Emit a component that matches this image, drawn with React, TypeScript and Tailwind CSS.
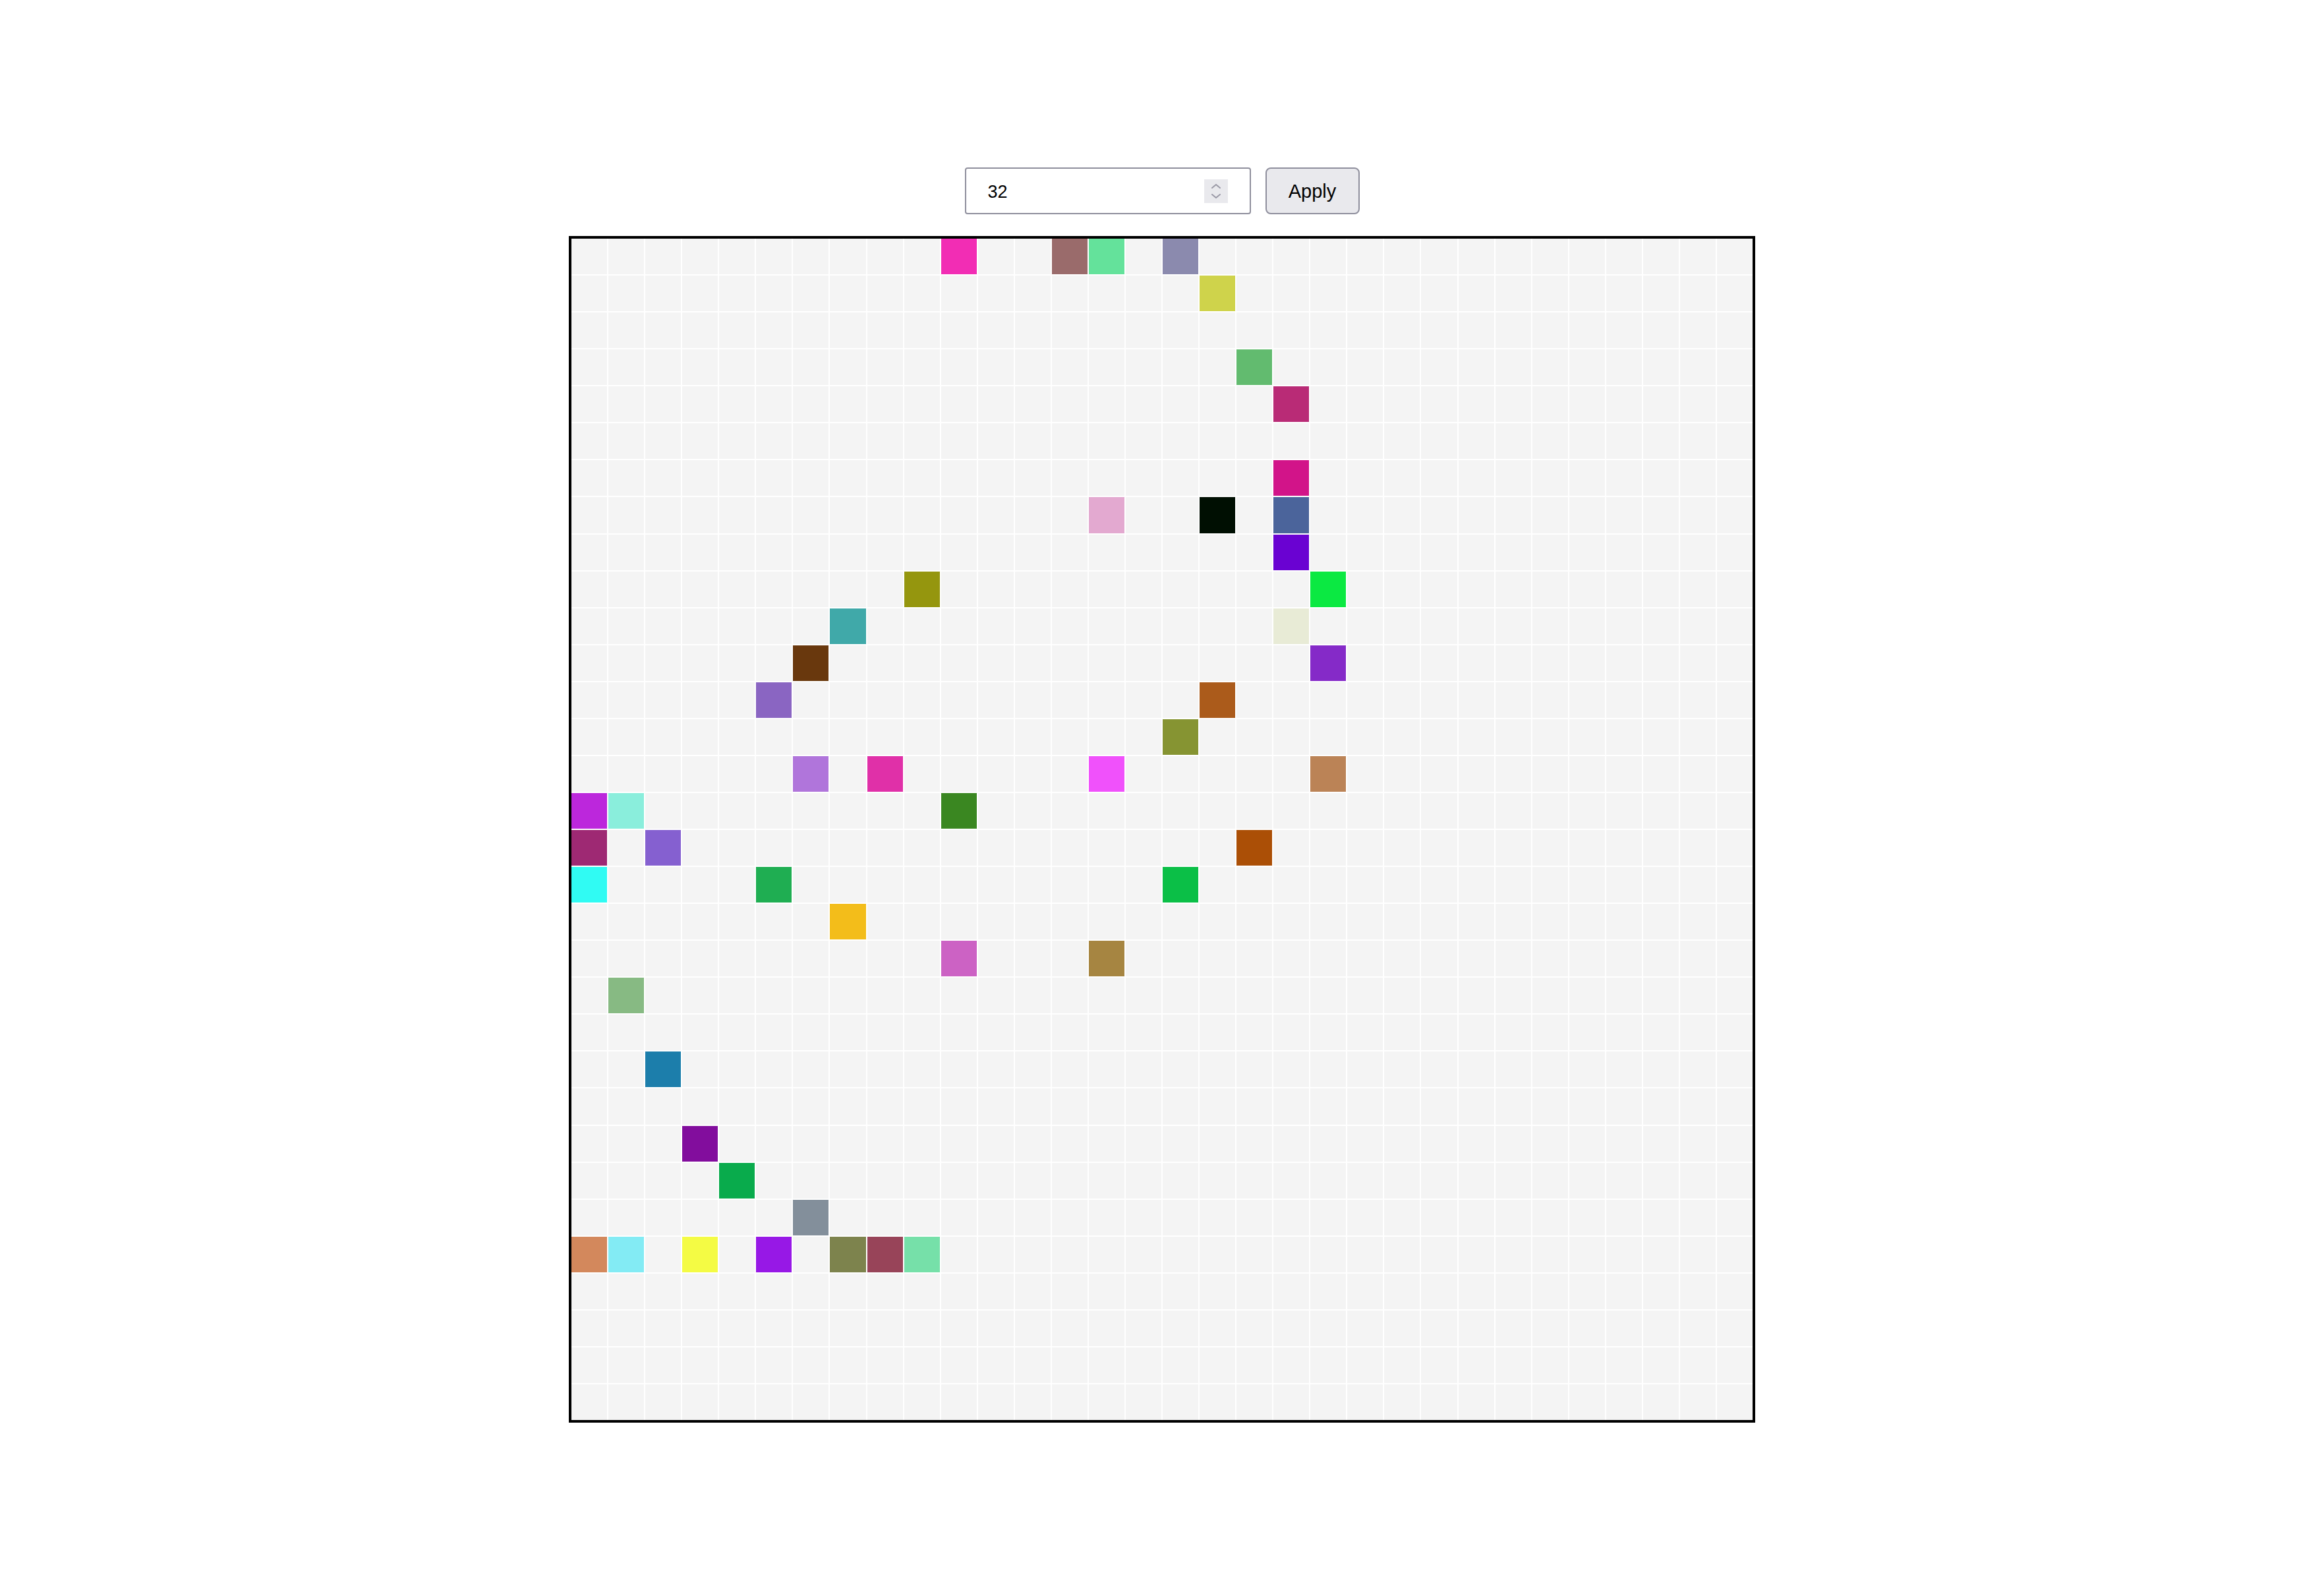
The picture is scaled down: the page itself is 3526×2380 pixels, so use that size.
import React, { useState } from 'react';

type Cell = { r: number; c: number; color: string };

const painted: Cell[] = [
  { r: 0, c: 10, color: '#f22db4' },
  { r: 0, c: 13, color: '#9a6b6b' },
  { r: 0, c: 14, color: '#64e29b' },
  { r: 0, c: 16, color: '#8b8aae' },
  { r: 1, c: 17, color: '#cfd34b' },
  { r: 3, c: 18, color: '#62bb6f' },
  { r: 4, c: 19, color: '#b92b76' },
  { r: 6, c: 19, color: '#d21489' },
  { r: 7, c: 14, color: '#e3a9d0' },
  { r: 7, c: 17, color: '#000f02' },
  { r: 7, c: 19, color: '#4b649b' },
  { r: 8, c: 19, color: '#6a02d2' },
  { r: 9, c: 9, color: '#95960e' },
  { r: 9, c: 20, color: '#0be942' },
  { r: 10, c: 7, color: '#40a9a9' },
  { r: 10, c: 19, color: '#e8ebd6' },
  { r: 11, c: 6, color: '#69380d' },
  { r: 11, c: 20, color: '#852ac8' },
  { r: 12, c: 5, color: '#8a65c2' },
  { r: 12, c: 17, color: '#ab5b1b' },
  { r: 13, c: 16, color: '#869432' },
  { r: 14, c: 6, color: '#b075db' },
  { r: 14, c: 8, color: '#e030a8' },
  { r: 14, c: 14, color: '#f051fb' },
  { r: 14, c: 20, color: '#bb8356' },
  { r: 15, c: 0, color: '#bc27dc' },
  { r: 15, c: 1, color: '#8aeedc' },
  { r: 15, c: 10, color: '#3a8721' },
  { r: 16, c: 0, color: '#9e2973' },
  { r: 16, c: 2, color: '#8560d0' },
  { r: 16, c: 18, color: '#ab4f06' },
  { r: 17, c: 0, color: '#30fbf3' },
  { r: 17, c: 5, color: '#1fae52' },
  { r: 17, c: 16, color: '#0bbf47' },
  { r: 18, c: 7, color: '#f3bd1a' },
  { r: 19, c: 10, color: '#cc62c4' },
  { r: 19, c: 14, color: '#a68541' },
  { r: 20, c: 1, color: '#87ba83' },
  { r: 22, c: 2, color: '#1c7eab' },
  { r: 24, c: 3, color: '#820d9d' },
  { r: 25, c: 4, color: '#09ab4c' },
  { r: 26, c: 6, color: '#838f9b' },
  { r: 27, c: 0, color: '#d3885c' },
  { r: 27, c: 1, color: '#83ebf4' },
  { r: 27, c: 3, color: '#f4fb44' },
  { r: 27, c: 5, color: '#9718e6' },
  { r: 27, c: 7, color: '#7d834d' },
  { r: 27, c: 8, color: '#984459' },
  { r: 27, c: 9, color: '#76e0a9' },
];

const SIZE = 32;

const Spinner: React.FC = () => (
  <div className="w-[36px] h-[36px] bg-[#e9e9ed] flex items-center justify-center">
    <svg width="20" height="30" viewBox="0 0 20 30" fill="none">
      <path d="M4 10 L10 5 L16 10" stroke="#9a99a6" strokeWidth="2" strokeLinecap="round" strokeLinejoin="round" />
      <path d="M4 20 L10 25 L16 20" stroke="#9a99a6" strokeWidth="2" strokeLinecap="round" strokeLinejoin="round" />
    </svg>
  </div>
);

const App: React.FC = () => {
  const [size] = useState(SIZE);
  const colors = new Map(painted.map((p) => [p.r * size + p.c, p.color]));

  return (
    <div className="min-h-screen bg-white flex flex-col items-center pt-[254px]" style={{ fontFamily: '"Liberation Sans", Arial, sans-serif' }}>
      <div className="flex items-center gap-[22px]">
        <div className="w-[434px] h-[71px] border-2 border-[#8f8f9d] rounded-[4px] bg-white flex items-center pl-[33px] pr-[33px]">
          <span className="flex-1 text-[27px] leading-none pt-[3px] text-black">{size}</span>
          <Spinner />
        </div>
        <button className="w-[143px] h-[71px] border-2 border-[#8f8f9d] rounded-[8px] bg-[#e9e9ed] text-[29px] leading-none pt-[2px] text-black flex items-center justify-center">
          Apply
        </button>
      </div>

      <div className="mt-[33px] w-[1800px] h-[1800px] border-4 border-black bg-white">
        <div className="grid grid-cols-[repeat(32,minmax(0,1fr))] grid-rows-[repeat(32,minmax(0,1fr))] gap-[2px] w-full h-full">
          {Array.from({ length: size * size }).map((_, i) => (
            <div
              key={i}
              className="bg-[#f4f4f4]"
              style={colors.has(i) ? { backgroundColor: colors.get(i) } : undefined}
            />
          ))}
        </div>
      </div>
    </div>
  );
};

export default App;
